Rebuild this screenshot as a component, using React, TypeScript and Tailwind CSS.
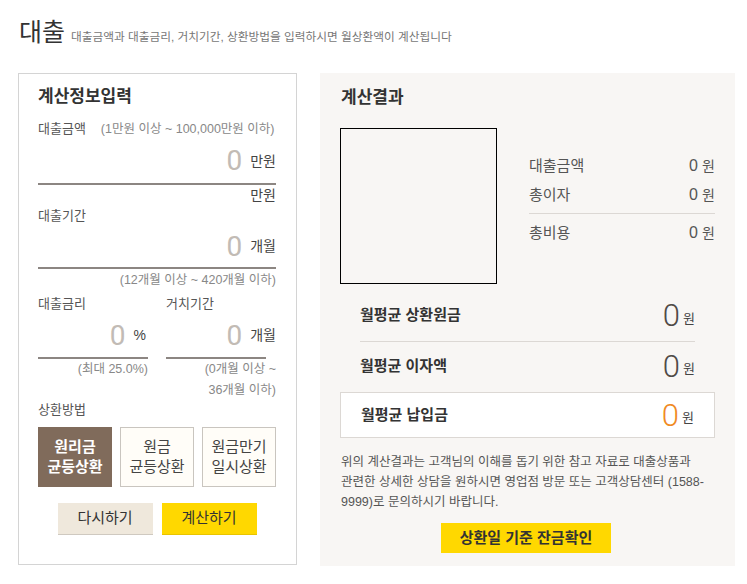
import type { ReactNode } from 'react';

const font = { fontFamily: '"Liberation Sans", "Noto Sans CJK KR", sans-serif' };
const thin = { fontFamily: 'Roboto, "Liberation Sans", sans-serif' };

function Field({ value, unit, unitClass = '' }: { value: string; unit: string; unitClass?: string }) {
  return (
    <div className="flex h-full items-center justify-end gap-2 border-b-2 border-[#8c8682]">
      <span className="text-[28px] leading-none text-[#c2bbb5]" style={thin}>
        {value}
      </span>
      <span className={`text-[14px] text-[#444] ${unitClass}`}>{unit}</span>
    </div>
  );
}

function Stat({ label, value, className = '' }: { label: string; value: string; className?: string }) {
  return (
    <div className={`flex h-5 items-center justify-between text-[15px] text-[#555] ${className}`}>
      <span>{label}</span>
      <span>
        <span className="text-[16px]">{value}</span> <span className="text-[14px]">원</span>
      </span>
    </div>
  );
}

function Monthly({ label, children, className = '' }: { label: string; children: ReactNode; className?: string }) {
  return (
    <div className={`flex items-center justify-between ${className}`}>
      <span className="text-[15px] font-semibold text-[#333]">{label}</span>
      <span className="flex items-end">
        {children}
        <span className="mb-[3px] ml-[3px] text-[13px] text-[#444]">원</span>
      </span>
    </div>
  );
}

function Zero({ color }: { color: string }) {
  return (
    <span className={`text-[31px] font-light leading-none ${color}`} style={thin}>
      0
    </span>
  );
}

export default function App() {
  return (
    <div className="h-[584px] w-[747px] bg-white pl-[18px]" style={font}>
      {/* 제목 */}
      <div className="flex h-[73px] items-start pt-[15px]">
        <h1 className="ml-[1px] text-[25px] leading-[34px] text-[#333]">대출</h1>
        <p className="ml-[6px] mt-[13px] text-[11.7px] text-[#777]">
          대출금액과 대출금리, 거치기간, 상환방법을 입력하시면 월상환액이 계산됩니다
        </p>
      </div>

      <div className="flex items-start">
        {/* 입력 */}
        <div className="h-[492px] w-[279px] shrink-0 border border-[#d4d4d4] pl-[19px] pr-[20px] pt-[11px]">
          <h2 className="flex h-[24px] items-center text-[17px] font-bold text-[#333]">계산정보입력</h2>

          <div className="mt-[10px] flex h-5 items-center text-[13px] text-[#555]">
            <span>대출금액</span>
            <span className="ml-[15px] text-[12.5px] text-[#888]">(1만원 이상 ~ 100,000만원 이하)</span>
          </div>
          <div className="h-[46px]">
            <Field value="0" unit="만원" />
          </div>
          <div className="flex h-5 items-center justify-end text-[14px] text-[#444]">만원</div>

          <div className="mt-[1px] flex h-5 items-center text-[13px] text-[#555]">대출기간</div>
          <div className="h-[43px]">
            <Field value="0" unit="개월" />
          </div>
          <div className="flex h-[22px] items-center justify-end text-[12.5px] text-[#888]">(12개월 이상 ~ 420개월 이하)</div>

          <div className="mt-[3px] flex gap-[18px]">
            <div className="w-[110px]">
              <div className="flex h-5 items-center text-[13px] text-[#555]">대출금리</div>
              <div className="h-[45px]">
                <Field value="0" unit="%" unitClass="mr-[2px] text-[13px]" />
              </div>
              <div className="text-right text-[12.5px] leading-[21px] text-[#888]">(최대 25.0%)</div>
            </div>
            <div className="flex-1">
              <div className="flex h-5 items-center text-[13px] text-[#555]">거치기간</div>
              <div className="mr-[10px] h-[45px]">
                <Field value="0" unit="개월" unitClass="-mr-[10px]" />
              </div>
              <div className="text-right text-[12.5px] leading-[21px] text-[#888]">
                (0개월 이상 ~
                <br />
                36개월 이하)
              </div>
            </div>
          </div>

          <div className="flex h-[18px] items-center text-[13px] text-[#555]">상환방법</div>
          <div className="mt-[8px] flex justify-between">
            <button className="h-[60px] w-[74px] bg-[#806b5b] text-[15px] font-bold leading-[20px] text-white">
              원리금
              <br />
              균등상환
            </button>
            <button className="h-[60px] w-[74px] border border-[#c9c5bf] bg-[#fffdf8] text-[15px] leading-[20px] text-[#444]">
              원금
              <br />
              균등상환
            </button>
            <button className="h-[60px] w-[74px] border border-[#c9c5bf] bg-[#fffdf8] text-[15px] leading-[20px] text-[#444]">
              원금만기
              <br />
              일시상환
            </button>
          </div>
          <div className="mt-[16px] flex justify-center gap-[9px]">
            <button className="h-[31px] w-[95px] bg-[#efe8dc] text-[15px] text-[#333] shadow-[0_1px_0_#cfc9c0]">다시하기</button>
            <button className="h-[31px] w-[95px] bg-[#ffd800] text-[15px] text-[#333] shadow-[0_1px_0_#e8c400]">계산하기</button>
          </div>
        </div>

        {/* 결과 */}
        <div className="ml-[23px] h-[493px] w-[415px] shrink-0 bg-[#f8f6f4] px-[20px] pt-[13px]">
          <h2 className="flex h-[24px] items-center pl-[1px] text-[17px] font-bold text-[#333]">계산결과</h2>

          <div className="mt-[18px] flex">
            <div className="h-[156px] w-[157px] border border-black" />
            <div className="ml-[32px] flex-1">
              <Stat label="대출금액" value="0" className="mt-[28px]" />
              <Stat label="총이자" value="0" className="mt-[9px]" />
              <div className="mt-[8px] h-px bg-[#dcd8d4]" />
              <Stat label="총비용" value="0" className="mt-[9px]" />
            </div>
          </div>

          <div className="mx-[20px] mt-[6px]">
            <Monthly label="월평균 상환원금" className="h-[52px] border-b border-[#dcd8d4]">
              <Zero color="text-[#4f4a47]" />
            </Monthly>
            <Monthly label="월평균 이자액" className="h-[48px]">
              <Zero color="text-[#4f4a47]" />
            </Monthly>
          </div>
          <div className="mt-[2px] h-[46px] border border-[#dcd8d4] bg-white px-[20px]">
            <Monthly label="월평균 납입금" className="h-full">
              <Zero color="text-[#f08a24]" />
            </Monthly>
          </div>

          <p className="-mr-[12px] mt-[14px] whitespace-nowrap pl-[1px] text-[12.5px] leading-[20px] text-[#555]">
            위의 계산결과는 고객님의 이해를 돕기 위한 참고 자료로 대출상품과
            <br />
            관련한 상세한 상담을 원하시면 영업점 방문 또는 고객상담센터 (1588-
            <br />
            9999)로 문의하시기 바랍니다.
          </p>
          <div className="mt-[11px] flex justify-center pr-[3px]">
            <button className="h-[30px] w-[170px] bg-[#ffd800] text-[15px] font-bold text-[#333]">상환일 기준 잔금확인</button>
          </div>
        </div>
      </div>
    </div>
  );
}
